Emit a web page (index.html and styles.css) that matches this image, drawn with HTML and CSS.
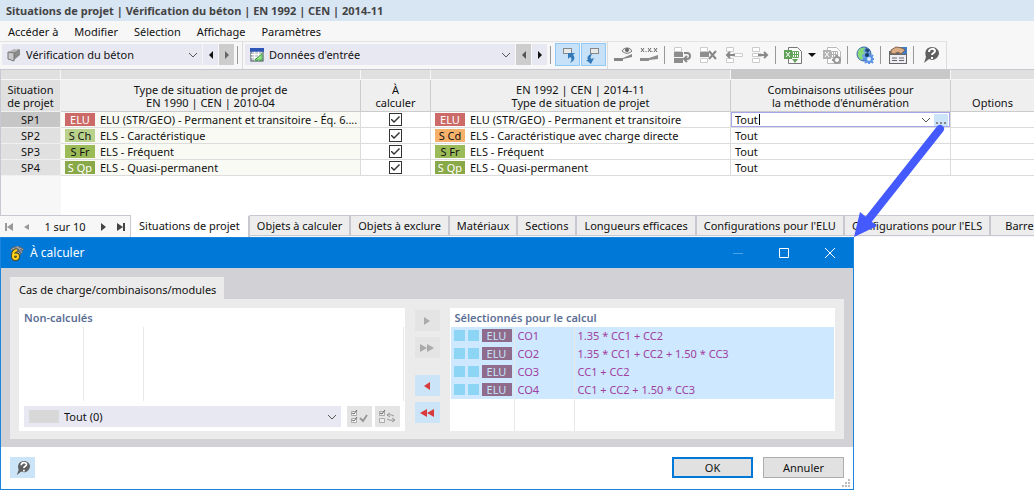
FILE: index.html
```html
<!DOCTYPE html>
<html lang="fr">
<head>
    <meta charset="UTF-8">
    <meta name="viewport" content="width=device-width, initial-scale=1.0">
    <title>Situations de projet</title>
    <link rel="stylesheet" href="styles.css">
</head>
<body>
    <h1 class="title">Situations de projet | Vérification du béton | EN 1992 | CEN | 2014-11</h1>
    <nav class="menu">
        <a href="#">Accéder à</a>
        <a href="#">Modifier</a>
        <a href="#">Sélection</a>
        <a href="#">Affichage</a>
        <a href="#">Paramètres</a>
    </nav>

    <div class="toolbar">
        <div class="group">
            <div class="combo combo-addon">
                <svg width="14" height="14" viewBox="0 0 14 14"><path d="M5 5l6-4 2 1v5l-6 5z" fill="#8a8a8a"/><path d="M1 4l6-3 6 1-6 4z" fill="#b5b5b5"/><path d="M1 4l6 1v8l-6-2z" fill="#c9c9c9" stroke="#777"/><path d="M7 5l6-3" stroke="#777"/></svg>
                <select aria-label="Module"><option>Vérification du béton</option></select>
                <svg class="chevron" width="10" height="6" viewBox="0 0 10 6"><path d="M1 1l4 4 4-4"/></svg>
            </div>
            <button class="step" aria-label="Module précédent"><svg width="4" height="8" viewBox="0 0 4 8"><path d="M4 0v8L0 4z" fill="#111"/></svg></button>
            <button class="step off" aria-label="Module suivant"><svg width="4" height="8" viewBox="0 0 4 8"><path d="M0 0v8l4-4z" fill="#666"/></svg></button>
            <span class="sep"></span>
        </div>
        <div class="group">
            <div class="combo combo-table">
                <svg width="14" height="14" viewBox="0 0 15 15"><rect x="1" y="1" width="13" height="13" fill="#c9cdd2" stroke="#47545c"/><path d="M0 0h15v4H0z" fill="#2d55b5"/><path d="M1 7h13M1 10h13M5 4v10M9 4v10" stroke="#fff"/><path d="M13 6v7H5z" fill="#9be38b" stroke="#30983a"/></svg>
                <select aria-label="Tableau"><option>Données d'entrée</option></select>
                <svg class="chevron" width="10" height="6" viewBox="0 0 10 6"><path d="M1 1l4 4 4-4"/></svg>
            </div>
            <button class="step off" aria-label="Tableau précédent"><svg width="4" height="8" viewBox="0 0 4 8"><path d="M4 0v8L0 4z" fill="#555"/></svg></button>
            <button class="step" aria-label="Tableau suivant"><svg width="4" height="8" viewBox="0 0 4 8"><path d="M0 0v8l4-4z" fill="#111"/></svg></button>
            <span class="sep"></span>
            <button class="tool on" aria-label="Sélection synchronisée"><svg width="18" height="18" viewBox="0 0 18 18"><rect x="4.500" y="2.500" width="8" height="5" fill="#e8e8e8" stroke="#888"/><path d="M9 7h7l-2 2c3 3 1 6-3 8 2-3 2-5 0-6l-2 2z" fill="#3479b8"/></svg></button>
            <button class="tool on" aria-label="Afficher la sélection"><svg width="18" height="18" viewBox="0 0 18 18"><rect x="5.500" y="2.500" width="8" height="5" fill="#e8e8e8" stroke="#888"/><path d="M6 8c-4 2-4 4-3 6l-2 0 5 4 3-6-3 1c-1-2 0-3 1-5z" fill="#3479b8"/></svg></button>
        </div>
        <div class="group icons">
            <button class="tool" aria-label="Afficher"><svg width="18" height="18" viewBox="0 0 18 18"><path d="M0 12h9l9-4v3l-9 2v2H0z" fill="#858585"/><path d="M8 5c2-4 8-4 10 0-3 3-7 3-10 0z" fill="#eee" stroke="#777"/><circle cx="13" cy="4" r="2" fill="#666"/></svg></button>
            <button class="tool" aria-label="Valeurs"><svg width="18" height="18" viewBox="0 0 18 18"><path d="M0 12h9l9-3v4l-9 1v1H0z" fill="#8d8d8d"/><path d="M1 2l3 4m0-4L1 6M8 2l3 4m0-4L8 6M14 2l3 4m0-4l-3 4M6 5v1m6-1v1" stroke="#666"/></svg></button>
            <span class="sep"></span>
            <button class="tool" aria-label="Rétablir les lignes"><svg width="18" height="18" viewBox="0 0 18 18"><path d="M1.500 1.500h7v4h-7z" fill="#fff" stroke="#ccc"/><path d="M1 6h9v5H1zM1 12h9v5H1z" fill="#8d8d8d"/><path d="M11 7h3c4 0 4 6 0 6h-3m3-3l-3 3 3 3" fill="none" stroke="#888" stroke-width="2"/></svg></button>
            <button class="tool" aria-label="Supprimer les lignes"><svg width="18" height="18" viewBox="0 0 18 18"><path d="M1.500 1.500h7v4h-7zM1.500 12.500h7v4h-7z" fill="#fff" stroke="#ccc"/><path d="M1 6h9v5H1z" fill="#8d8d8d"/><path d="M10 5l7 8m0-8l-7 8" stroke="#888" stroke-width="2"/></svg></button>
            <button class="tool" aria-label="Insérer une ligne"><svg width="18" height="18" viewBox="0 0 18 18"><path d="M1.500 1.500h7v4h-7zM1.500 12.500h7v4h-7zM8.500 7.500h9v3h-9z" fill="#fff" stroke="#ccc"/><path d="M10 9H2m3-3L2 9l3 3" fill="none" stroke="#888" stroke-width="2"/></svg></button>
            <button class="tool" aria-label="Ajouter une ligne"><svg width="18" height="18" viewBox="0 0 18 18"><path d="M1.500 1.500h7v4h-7zM1.500 12.500h7v4h-7zM1.500 7.500h9v3h-9z" fill="#fff" stroke="#ccc"/><path d="M7 9h9m-3-3l3 3-3 3" fill="none" stroke="#888" stroke-width="2"/></svg></button>
            <span class="sep"></span>
            <button class="tool" aria-label="Exporter vers Excel"><svg width="18" height="18" viewBox="0 0 18 18"><path d="M4.500 1.500h9l4 4v12h-13z" fill="#fff" stroke="#777"/><path d="M0 4h8v9H0z" fill="#62a159"/><path d="M2 6l4 5m0-5l-4 5" stroke="#fff"/><path d="M8.500 5.500h6v6h-6zM8 8.500h7M10.500 5v6M12.500 5v6" fill="none" stroke="#65a45d"/><path d="M8 13h6l-3 4z" fill="#62a159"/></svg></button>
            <svg class="drop" width="8" height="4" viewBox="0 0 8 4"><path d="M0 0h8L4 4z" fill="#111"/></svg>
            <button class="tool" aria-label="Options d'exportation"><svg width="18" height="18" viewBox="0 0 18 18"><path d="M4.500 1.500h9l4 4v12h-13z" fill="#fff" stroke="#b8b8b8"/><path d="M0 4h8v9H0z" fill="#b2b2b2"/><path d="M2 6l4 5m0-5l-4 5" stroke="#fff"/><path d="M8.500 5.500h6v6h-6zM8 8.500h7M10.500 5v6M12.500 5v6" fill="none" stroke="#b2b2b2"/><circle cx="14" cy="14" r="3" fill="#fff" stroke="#999" stroke-width="2"/><path d="M14 9v2m0 6v1M9 14h2m6 0h1" stroke="#999" stroke-width="2"/></svg></button>
            <span class="sep"></span>
            <button class="tool" aria-label="Services web"><svg width="18" height="18" viewBox="0 0 18 18"><circle cx="8" cy="8" r="7" fill="#6fa3e4" stroke="#3865a0"/><path d="M2 5c1-3 6-4 7-3L7 5l2 2-3 2 1 4-2 1c-3-2-4-5-3-9z" fill="#86da79"/><path d="M10 2l4 2-2 3-3-2z" fill="#244f80"/><circle cx="13" cy="13" r="3" fill="#d9edff" stroke="#5c92e6" stroke-width="2"/><path d="M13 7v3m0 6v2M7 13h3m6 0h2M9 9l2 2m4 4l2 2m0-8l-2 2m-4 4l-2 2" stroke="#5c92e6" stroke-width="2"/><circle cx="11" cy="9" r="2" fill="#163f67"/></svg></button>
            <span class="sep"></span>
            <button class="tool" aria-label="Bibliothèque"><svg width="18" height="18" viewBox="0 0 18 18"><path d="M0 5h18v13H0z" fill="#666"/><path d="M1 9h16v8H1z" fill="#eeedf6"/><path d="M10 1h8v7h-8z" fill="#417bc7"/><path d="M2 4l5-3 6 1 3 2-4 4-3-2-4 2-3-1z" fill="#dbad87" stroke="#86644d"/><path d="M3 12h5m2 0h5M3 14.500h5m2 0h5" stroke="#666"/></svg></button>
            <span class="sep"></span>
            <button class="tool" aria-label="Aide"><svg width="16" height="17" viewBox="0 0 16 17"><path d="M9 1c4 0 7 3 7 6s-3 7-7 7l-3-1-5 4 2-6C1 5 4 1 9 1z" fill="#606060"/><path d="M6 6c0-4 6-4 6-1 0 2-3 2-3 4m0 2v2" fill="none" stroke="#fff" stroke-width="2"/></svg></button>
        </div>
    </div>

    <table class="grid">
        <colgroup>
            <col class="c-id"><col class="c-type"><col class="c-calc"><col class="c-type"><col class="c-combi"><col>
        </colgroup>
        <thead>
            <tr class="strip"><td></td><td></td><td></td><td></td><td class="active"></td><td></td></tr>
            <tr>
                <th>Situation<br>de projet</th>
                <th>Type de situation de projet de<br>EN 1990 | CEN | 2010-04</th>
                <th>À<br>calculer</th>
                <th>EN 1992 | CEN | 2014-11<br>Type de situation de projet</th>
                <th>Combinaisons utilisées pour<br>la méthode d'énumération</th>
                <th>Options</th>
            </tr>
        </thead>
        <tbody>
            <tr class="current">
                <th>SP1</th>
                <td class="locked"><span class="badge elu">ELU</span>ELU (STR/GEO) - Permanent et transitoire - Éq. 6....</td>
                <td class="check"><input type="checkbox" aria-label="Calculer SP1" checked></td>
                <td><span class="badge elu">ELU</span>ELU (STR/GEO) - Permanent et transitoire</td>
                <td class="edit">
                    <div class="editor">
                        <input type="text" aria-label="Combinaisons utilisées" value="Tout"><i class="caret"></i>
                        <svg class="chevron" width="10" height="6" viewBox="0 0 10 6"><path d="M1 1l4 4 4-4"/></svg>
                        <button aria-label="Modifier les combinaisons"><svg width="10" height="2" viewBox="0 0 10 2"><path d="M0 0h2v2H0zM4 0h2v2H4zM8 0h2v2H8z" fill="#888"/></svg></button>
                    </div>
                </td>
                <td></td>
            </tr>
            <tr>
                <th>SP2</th>
                <td class="locked"><span class="badge ch">S Ch</span>ELS - Caractéristique</td>
                <td class="check"><input type="checkbox" aria-label="Calculer SP2" checked></td>
                <td><span class="badge cd">S Cd</span>ELS - Caractéristique avec charge directe</td>
                <td>Tout</td>
                <td></td>
            </tr>
            <tr>
                <th>SP3</th>
                <td class="locked"><span class="badge fr">S Fr</span>ELS - Fréquent</td>
                <td class="check"><input type="checkbox" aria-label="Calculer SP3" checked></td>
                <td><span class="badge fr">S Fr</span>ELS - Fréquent</td>
                <td>Tout</td>
                <td></td>
            </tr>
            <tr>
                <th>SP4</th>
                <td class="locked"><span class="badge qp">S Qp</span>ELS - Quasi-permanent</td>
                <td class="check"><input type="checkbox" aria-label="Calculer SP4" checked></td>
                <td><span class="badge qp">S Qp</span>ELS - Quasi-permanent</td>
                <td>Tout</td>
                <td></td>
            </tr>
        </tbody>
    </table>
    <div class="empty"></div>

    <div class="sheets">
        <div class="pager">
            <button aria-label="Premier"><svg width="8" height="8" viewBox="0 0 8 8"><path d="M0 0h2v8H0zM8 0v8L2 4z" fill="#999"/></svg></button>
            <button aria-label="Précédent"><svg width="8" height="8" viewBox="0 0 8 8"><path d="M6 1v6L1 4z" fill="#999"/></svg></button>
            <span>1 sur 10</span>
            <button aria-label="Suivant"><svg width="8" height="8" viewBox="0 0 8 8"><path d="M2 0v8l5-4z" fill="#444"/></svg></button>
            <button aria-label="Dernier"><svg width="8" height="8" viewBox="0 0 8 8"><path d="M6 0h2v8H6zM0 0v8l6-4z" fill="#444"/></svg></button>
        </div>
        <a class="sheet selected" href="#">Situations de projet</a>
        <a class="sheet" href="#">Objets à calculer</a>
        <a class="sheet" href="#">Objets à exclure</a>
        <a class="sheet" href="#">Matériaux</a>
        <a class="sheet" href="#">Sections</a>
        <a class="sheet" href="#">Longueurs efficaces</a>
        <a class="sheet" href="#">Configurations pour l'ELU</a>
        <a class="sheet" href="#">Configurations pour l'ELS</a>
        <a class="sheet last" href="#">Barre</a>
    </div>

    <div class="dialog" role="dialog" aria-labelledby="dialog-title">
        <div class="dialog-head">
            <svg width="16" height="16" viewBox="0 0 16 16"><path d="M1 5c3-5 10-5 14-1l-4 7-4-6z" fill="#5f6870"/><path d="M4 3l7 6M8 1l5 7M2 5c4-3 8-3 12 0" fill="none" stroke="#a8adb2"/><path d="M8 5c-3 1-4 2-4 6 0 4 5 4 5 0 0-2-4-2-5 0" fill="none" stroke="#5d4a12" stroke-width="4"/><path d="M8 5c-3 1-4 2-4 6 0 4 5 4 5 0 0-2-4-2-5 0" fill="none" stroke="#ffd41e" stroke-width="2"/></svg>
            <h2 id="dialog-title">À calculer</h2>
            <button aria-label="Réduire"><svg width="10" height="10" viewBox="0 0 10 10"><path d="M0 5.500h10" stroke="#4ba3e8"/></svg></button>
            <button aria-label="Agrandir"><svg width="10" height="10" viewBox="0 0 10 10"><path d="M.5.5h9v9h-9z" fill="none" stroke="#fff"/></svg></button>
            <button aria-label="Fermer"><svg width="10" height="10" viewBox="0 0 10 10"><path d="M0 0l10 10M10 0L0 10" stroke="#fff"/></svg></button>
        </div>
        <div class="dialog-body">
            <a class="tab" href="#">Cas de charge/combinaisons/modules</a>
            <div class="panel">
                <section class="list">
                    <h3>Non-calculés</h3>
                    <div class="blank-list"><span></span><span></span><span></span></div>
                    <div class="filter">
                        <div class="combo">
                            <i class="swatch"></i>
                            <select aria-label="Filtre"><option>Tout (0)</option></select>
                            <svg class="chevron" width="10" height="6" viewBox="0 0 10 6"><path d="M1 1l4 4 4-4"/></svg>
                        </div>
                        <button class="square" aria-label="Tout sélectionner"><svg width="17" height="14" viewBox="0 0 17 14"><path d="M.5 1.500h5v4h-5zM.5 8.500h5v4h-5z" fill="#fff" stroke="#aaa"/><path d="M1 3l2 1 3-4M1 10l2 1 3-4" fill="none" stroke="#666"/><path d="M9 8l3 3 4-6" fill="none" stroke="#999" stroke-width="2"/></svg></button>
                        <button class="square" aria-label="Inverser la sélection"><svg width="17" height="14" viewBox="0 0 17 14"><path d="M.5 1.500h5v4h-5zM.5 8.500h5v4h-5z" fill="#eee" stroke="#aaa"/><path d="M1 3l2 1 3-4" fill="none" stroke="#666"/><path d="M15 6c-3-2-5-1-7-1m3-2L8 5l3 2M8 9c3 2 5 1 8 1m-3-2l3 2-3 2" fill="none" stroke="#999"/></svg></button>
                    </div>
                </section>
                <div class="movers">
                    <button class="square" aria-label="Ajouter"><svg width="6" height="8" viewBox="0 0 6 8"><path d="M0 0v8l6-4z" fill="#aaa"/></svg></button>
                    <button class="square" aria-label="Tout ajouter"><svg width="14" height="8" viewBox="0 0 14 8"><path d="M0 0v8l7-4zM7 0v8l7-4z" fill="#aaa"/></svg></button>
                    <button class="square on" aria-label="Retirer"><svg width="6" height="8" viewBox="0 0 6 8"><path d="M6 0v8L0 4z" fill="#d83b3b"/></svg></button>
                    <button class="square on" aria-label="Tout retirer"><svg width="14" height="8" viewBox="0 0 14 8"><path d="M7 0v8L0 4zM14 0v8L7 4z" fill="#d83b3b"/></svg></button>
                </div>
                <section class="list">
                    <h3>Sélectionnés pour le calcul</h3>
                    <table class="chosen">
                        <colgroup><col class="c-kind"><col class="c-name"><col></colgroup>
                        <tbody>
                            <tr><td><i></i><i></i><span class="badge">ELU</span></td><td>CO1</td><td>1.35 * CC1 + CC2</td></tr>
                            <tr><td><i></i><i></i><span class="badge">ELU</span></td><td>CO2</td><td>1.35 * CC1 + CC2 + 1.50 * CC3</td></tr>
                            <tr><td><i></i><i></i><span class="badge">ELU</span></td><td>CO3</td><td>CC1 + CC2</td></tr>
                            <tr><td><i></i><i></i><span class="badge">ELU</span></td><td>CO4</td><td>CC1 + CC2 + 1.50 * CC3</td></tr>
                            <tr class="rest"><td></td><td></td><td></td></tr>
                        </tbody>
                    </table>
                </section>
            </div>
        </div>
        <div class="dialog-foot">
            <button class="square on" aria-label="Aide"><svg width="14" height="15" viewBox="0 0 16 17"><path d="M9 1c4 0 7 3 7 6s-3 7-7 7l-3-1-5 4 2-6C1 5 4 1 9 1z" fill="#606060"/><path d="M6 6c0-4 6-4 6-1 0 2-3 2-3 4m0 2v2" fill="none" stroke="#fff" stroke-width="2"/></svg></button>
            <button class="btn primary">OK</button>
            <button class="btn">Annuler</button>
        </div>
        <svg class="grip" width="8" height="8" viewBox="0 0 8 8"><path d="M6 0h2v2H6zM3 3h2v2H3zM6 3h2v2H6zM0 6h2v2H0zM3 6h2v2H3zM6 6h2v2H6z" fill="#bbb"/></svg>
    </div>

    <svg class="arrow" width="96" height="116" viewBox="0 0 96 116"><path d="M91 8L19 99" stroke="#445aff" stroke-width="8" stroke-linecap="round"/><path d="M5 116l6-25 17 14z" fill="#445aff"/></svg>
</body>
</html>
```

FILE: styles.css
```css
* {
    box-sizing: border-box;
}
body {
    margin: 0;
    position: relative;
    overflow: hidden;
    background-color: #fff;
    color: #111;
    font-family: 'Noto Sans', 'Open Sans', sans-serif;
    font-size: 11px;
    line-height: 14px;
}
button, select, input {
    font: inherit;
    color: inherit;
    border: none;
    padding: 0;
    margin: 0;
    border-radius: 0;
    background: none;
}
a {
    color: inherit;
    text-decoration: none;
}
svg {
    display: block;
    flex-shrink: 0;
}
h1, h2, h3 {
    margin: 0;
}
.title {
    height: 21px;
    padding: 0 6px;
    background-color: #d8e5f3;
    color: #444;
    font-size: 11px;
    font-weight: bold;
    line-height: 21px;
}
.menu {
    display: flex;
    gap: 16px;
    height: 20px;
    padding: 0 8px;
    background-color: #f7f7f7;
    line-height: 22px;
}

/* toolbar */
.toolbar {
    display: flex;
    height: 29px;
    background-color: #f7f7f7;
    border-bottom: 1px solid #c8c8d0;
}
.group {
    display: flex;
    align-items: center;
    gap: 1px;
    padding: 0 1px 2px 2px;
    border-top: 1px solid #e2e2e2;
    border-right: 1px solid #dcdcdc;
}
.combo {
    display: flex;
    align-items: center;
    gap: 5px;
    height: 21px;
    padding: 0 4px 0 5px;
    background-color: #e8e8f3;
}
.combo select {
    flex: 1;
    min-width: 0;
    appearance: none;
}
.combo-addon {
    width: 200px;
}
.combo-table {
    width: 270px;
}
.chevron {
    fill: none;
    stroke: #555;
}
.step {
    display: grid;
    place-items: center;
    width: 15px;
    height: 21px;
    background-color: #e8e8f3;
}
.step.off {
    background-color: #cdcdcd;
}
.sep {
    width: 1px;
    height: 18px;
    margin: 0 3px 0 2px;
    background-color: #999;
}
.tool {
    display: grid;
    place-items: center;
    width: 25px;
    height: 23px;
}
.tool.on {
    background-color: #c6e1f8;
    border: 1px solid #90c8f6;
}
.icons {
    padding-right: 3px;
}
.drop {
    margin: 0 2px;
}

/* design situations table */
.grid {
    width: 100%;
    table-layout: fixed;
    border-spacing: 0;
    border-left: 1px solid #c8c8d0;
}
.c-id {
    width: 60px;
}
.c-type {
    width: 300px;
}
.c-calc {
    width: 70px;
}
.c-combi {
    width: 220px;
}
.grid th, .grid td {
    height: 16px;
    padding: 0 4px;
    border-right: 1px solid #dcdcdc;
    border-bottom: 1px solid #dcdcdc;
    font-weight: normal;
    line-height: 15px;
    white-space: nowrap;
    overflow: hidden;
}
.grid .strip td {
    height: 10px;
    background-color: #e0e0e0;
    border-color: #f7f7f7;
}
.grid .strip .active {
    background-color: #c8c8c8;
}
.grid thead th {
    height: 32px;
    background-color: #efefef;
    border-color: #ccc;
    line-height: 13px;
    vertical-align: bottom;
    padding-bottom: 2px;
}
.grid thead th:first-child, .grid tbody th {
    background-color: #e0e0e0;
    border-color: #f0f0f0;
}
.grid .current th {
    background-color: #c6c6c6;
}
.grid .locked {
    background-color: #f8faf3;
}
.grid td:last-child, .grid th:last-child {
    border-right: none;
}
.badge {
    display: inline-block;
    width: 30px;
    height: 13px;
    margin-right: 5px;
    line-height: 13px;
    text-align: center;
    vertical-align: top;
}
.grid .badge {
    margin-top: 1px;
}
.elu {
    background-color: #cc6a68;
    color: #fff;
}
.ch {
    background-color: #b9d18b;
}
.cd {
    background-color: #f6b26b;
}
.fr {
    background-color: #9bbb59;
}
.qp {
    background-color: #89a847;
    color: #fff;
}
.check {
    text-align: center;
}
.check input {
    appearance: none;
    width: 13px;
    height: 13px;
    margin-top: 1px;
    border: 1px solid #333;
    background-color: #fff;
    vertical-align: top;
}
.check input:checked::before {
    content: '';
    display: block;
    height: 11px;
    background-color: #333;
    clip-path: polygon(1px 5px, 2px 5px, 4px 7px, 9px 2px, 10px 3px, 4px 9px, 1px 6px);
}
.grid .edit {
    padding: 0;
}
.editor {
    display: flex;
    align-items: center;
    height: 15px;
    padding: 0 1px 0 3px;
    border: 1px solid #a5a5e8;
}
.editor input {
    width: 24px;
    height: 13px;
}
.caret {
    width: 1px;
    height: 11px;
    background-color: #000;
}
.editor .chevron {
    margin-left: auto;
}
.editor button {
    display: grid;
    place-items: end center;
    width: 14px;
    height: 12px;
    margin-left: 3px;
    padding-bottom: 2px;
    background-color: #cce4f7;
}
.empty {
    height: 39px;
    border-left: 1px solid #c8c8d0;
    background: linear-gradient(90deg, #f7f7f7 60px, #fff 60px);
}

/* sheet tabs */
.sheets {
    display: flex;
    height: 22px;
    background-color: #f7f7f7;
    white-space: nowrap;
    overflow: hidden;
}
.pager {
    display: flex;
    flex-shrink: 0;
    align-items: center;
    gap: 10px;
    width: 131px;
    padding: 0 5px;
    border-top: 1px solid #c8c8d0;
    border-right: 1px solid #c8c8d0;
}
.pager span {
    flex: 1;
    text-align: center;
}
.sheet {
    flex-shrink: 0;
    height: 21px;
    padding: 0 7px;
    background-color: #ededed;
    border: 1px solid #c8c8d0;
    border-left-width: 0;
    border-right-width: 2px;
    line-height: 20px;
}
.sheet.selected {
    height: 22px;
    padding: 0 8px;
    background-color: #fff;
    border-top-color: #fff;
    border-bottom: none;
}
.sheet.last {
    flex: 1 0 auto;
    padding-left: 14px;
}

/* dialog */
.dialog {
    position: relative;
    width: 100%;
    max-width: 854px;
    border: 1px solid #1b84dc;
    background-color: #fff;
}
.dialog-head {
    display: flex;
    align-items: center;
    height: 30px;
    padding-left: 8px;
    background-color: #0078d7;
    color: #fff;
}
.dialog-head h2 {
    flex: 1;
    padding-left: 5px;
    font-size: 12px;
    font-weight: normal;
}
.dialog-head button {
    display: grid;
    place-items: center;
    width: 46px;
    height: 30px;
}
.dialog-body {
    padding: 9px 9px 8px;
    background-color: #d1d1d6;
}
.tab {
    display: inline-block;
    height: 22px;
    padding: 0 8px 0 9px;
    background-color: #ebebeb;
    line-height: 26px;
    vertical-align: top;
}
.panel {
    display: flex;
    gap: 10px;
    padding: 9px 9px 8px;
    background-color: #ebebeb;
}
.list {
    flex: 1;
    display: flex;
    flex-direction: column;
    background-color: #fff;
}
.list h3 {
    height: 19px;
    padding-left: 5px;
    color: #5c6f96;
    font-size: 11px;
    font-weight: 600;
    line-height: 19px;
}
.blank-list {
    display: grid;
    grid-template-columns: 65px 60px 1fr;
    flex: 1;
    margin-right: 1px;
}
.blank-list span {
    border-right: 1px solid #e8e8e8;
}
.filter {
    display: flex;
    gap: 3px;
    padding: 5px 5px 4px;
}
.filter .combo {
    flex: 1;
    margin-right: 3px;
}
.swatch {
    width: 30px;
    height: 13px;
    background-color: #d8d8d8;
}
.square {
    display: grid;
    place-items: center;
    width: 25px;
    height: 21px;
    background-color: #e4e4e4;
}
.square.on {
    background-color: #cce4f7;
}
.movers {
    display: flex;
    flex-direction: column;
    gap: 6px;
    padding: 2px 0;
}
.movers .square:nth-child(3) {
    margin-top: 11px;
}
.chosen {
    width: 100%;
    table-layout: fixed;
    border-spacing: 0;
    border: solid #fff;
    border-width: 0 1px;
    color: #a040a0;
}
.c-kind {
    width: 64px;
}
.c-name {
    width: 60px;
}
.chosen td {
    height: 18px;
    padding: 0 3px;
    background-color: #cee8ff;
    border-right: 1px solid #e8e8e8;
    line-height: 19px;
    white-space: nowrap;
}
.chosen tr {
    height: 18px;
}
.chosen td:last-child {
    border-right: none;
}
.chosen td {
    line-height: 18px;
}
.chosen i {
    display: inline-block;
    width: 11px;
    height: 11px;
    margin: 3px 3px 0 0;
    background-color: #8dd5f4;
    vertical-align: top;
}
.chosen .badge {
    margin: 2px 0 0;
    background-color: #8f6b8c;
    color: #c6e5fa;
}
.chosen .rest td {
    height: 32px;
    background-color: #fff;
}
.dialog-foot {
    display: flex;
    gap: 10px;
    padding: 10px 9px 11px;
}
.dialog-foot .square {
    margin-right: auto;
}
.btn {
    width: 81px;
    height: 21px;
    background-color: #e1e1e1;
    border: 1px solid #adadad;
}
.btn.primary {
    border: 2px solid #0078d7;
}
.grip {
    position: absolute;
    right: 3px;
    bottom: 2px;
}
.arrow {
    position: absolute;
    left: 849px;
    top: 121px;
    pointer-events: none;
}
```
